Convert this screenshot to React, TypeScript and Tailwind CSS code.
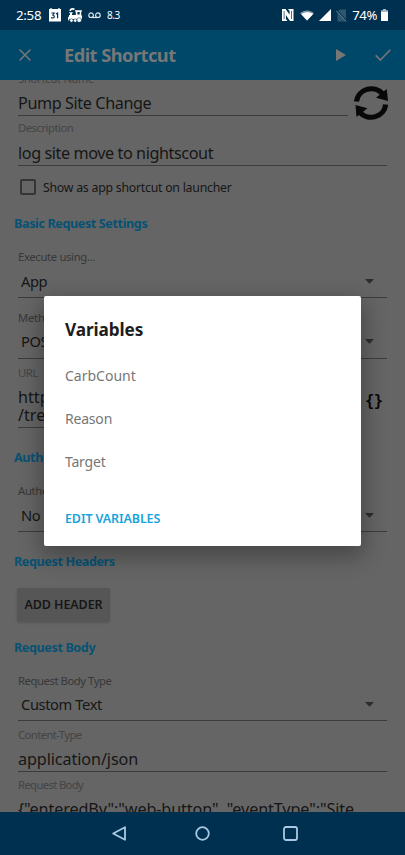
import React from "react";

function Label({ children, className = "" }: { children: React.ReactNode; className?: string }) {
  return <div className={"h-4 shrink-0 leading-4 whitespace-nowrap " + className}>{children}</div>;
}

function Heading({ children, className = "" }: { children: React.ReactNode; className?: string }) {
  return (
    <h2 className={"h-5 shrink-0 pl-3.5 text-[12.6px] leading-[22px] font-bold tracking-[-0.39px] whitespace-nowrap text-[#075274] " + className}>
      {children}
    </h2>
  );
}

function Value({ children, className = "" }: { children: React.ReactNode; className?: string }) {
  return (
    <div className={"h-6 shrink-0 text-[16.2px] leading-6 whitespace-nowrap text-[#161616] " + className}>{children}</div>
  );
}

function Select({ children, className = "" }: { children: React.ReactNode; className?: string }) {
  return (
    <div className={"mr-[18px] ml-[18px] flex shrink-0 items-start justify-between border-b border-[#3c3c3c] pr-[13px] pl-[3px] " + className}>
      <div className="text-[14.7px] leading-[22px] tracking-[-0.4px] whitespace-nowrap text-[#161616]">{children}</div>
      <svg className="mt-[9px] h-[5px] w-[9px]" viewBox="0 0 9 5">
        <path d="M0 0h9L4.5 4.8z" fill="#2c2c2c" />
      </svg>
    </div>
  );
}

function StatusBar() {
  return (
    <div className="flex h-[30px] shrink-0 items-center bg-[#00304f] pl-4 text-white">
      <span className="w-[33px] text-[13.3px] leading-5 tracking-[-0.3px] whitespace-nowrap">2:58</span>
      <svg className="h-[14px] w-[12px]" viewBox="0 0 12 14">
        <path d="M0 1h12v12.5H0z" fill="#fff" />
        <path d="M2 0v1.5M10 0v1.5" stroke="#fff" strokeWidth="1.3" />
        <path d="M2.4 5h2.8L3.8 7c2.2.3 1.8 3-.1 3-.7 0-1.2-.2-1.5-.6M7 6l1.6-1v5.3" fill="none" stroke="#00304f" strokeWidth="1.2" />
      </svg>
      <svg className="ml-[7px] h-[15px] w-[14px]" viewBox="0 0 14 15">
        <path d="M7 2.2H14v1.3h-.8V7.5H14V11H1.5L0 13V9.7L1 8.3V6.9h1V5.3H1.2V4.2h3.6v1.1H4v1.6h3.8V3.5H7zM9.4 4v2.6h2.3V4z" fill="#fff" fillRule="evenodd" />
        <path d="M2.2 3c0-1.8 1.8-2.6 4.3-1.6" fill="none" stroke="#fff" strokeWidth="1.7" />
        <circle cx="3.4" cy="12.5" r="1.7" fill="#fff" stroke="#00304f" strokeWidth=".5" />
        <circle cx="7.2" cy="12.5" r="1.7" fill="#fff" stroke="#00304f" strokeWidth=".5" />
        <circle cx="11.2" cy="12" r="2.3" fill="#fff" stroke="#00304f" strokeWidth=".5" />
      </svg>
      <svg className="ml-[6px] h-[7px] w-[13px]" viewBox="0 0 13 7">
        <circle cx="3.1" cy="3.2" r="2.3" fill="none" stroke="#dce6ec" strokeWidth="1.2" />
        <circle cx="9.9" cy="3.2" r="2.3" fill="none" stroke="#dce6ec" strokeWidth="1.2" />
        <path d="M3 5.5h7" stroke="#dce6ec" strokeWidth="1.2" />
      </svg>
      <span className="ml-[6px] text-[10px] leading-5 tracking-[-0.4px]">8.3</span>
      <div className="ml-auto flex items-center pr-[17px]">
        <svg className="h-[12px] w-[12px]" viewBox="0 0 12 12">
          <path d="M0 0h3.6l4 5.8V2L6 0h5.5v12H8L3.9 6.1v4L5.5 12H0z" fill="#fff" />
          <path d="M2.1 2v8.2M9.5 1.8V10" stroke="#00304f" strokeWidth=".7" />
        </svg>
        <svg className="ml-[5px] h-[12px] w-[16px]" viewBox="0 0 16 12">
          <path d="M1 4.2C5 .5 11 .5 15 4.2L8 11.6z" fill="#8298a7" />
          <path d="M2.4 5.2C6 2.8 10.5 2.8 14.2 5L8 11.6z" fill="#fff" />
        </svg>
        <svg className="ml-[4px] h-[12px] w-[12px]" viewBox="0 0 12 12">
          <path d="M12 0v12H0z" fill="#fff" />
        </svg>
        <svg className="ml-[5px] h-[13px] w-[11px]" viewBox="0 0 11 13">
          <path d="M3.5.5H10v12H1.5v-9z" fill="#2f5670" />
          <path d="M0 1l11 11.5" stroke="#00304f" strokeWidth="1.8" />
          <path d="M.2 1.7l10 10.8" stroke="#6c899b" strokeWidth="1" />
        </svg>
        <span className="ml-[5px] text-[13.2px] leading-5 tracking-[-0.4px]">74%</span>
        <svg className="ml-[4px] h-[12px] w-[7px]" viewBox="0 0 7 12">
          <path d="M2 0h3v1.3h2V12H0V1.3h2z" fill="#a8b9c5" />
          <path d="M0 3h7v9H0z" fill="#fff" />
        </svg>
      </div>
    </div>
  );
}

function AppBar() {
  return (
    <div className="flex h-[50px] shrink-0 items-center bg-[#00486a] pl-[19px]">
      <svg className="h-[12px] w-[12px]" viewBox="0 0 12 12">
        <path d="M.5.5l11 11M11.5.5l-11 11" stroke="#777" strokeWidth="1.5" />
      </svg>
      <h1 className="ml-[33px] text-[18.3px] leading-6 font-bold tracking-[-0.55px] whitespace-nowrap text-[#777]">
        Edit Shortcut
      </h1>
      <svg className="ml-auto h-[12px] w-[10px]" viewBox="0 0 10 12">
        <path d="M0 0l10 6-10 6z" fill="#777" />
      </svg>
      <svg className="mr-[14px] ml-[29px] h-[12px] w-[16px]" viewBox="0 0 16 12">
        <path d="M.7 6.4L5.3 11 15.3.8" fill="none" stroke="#777" strokeWidth="1.6" />
      </svg>
    </div>
  );
}

function Form() {
  return (
    <div className="flex min-h-0 flex-1 flex-col overflow-hidden bg-[#656565] text-[#383838]">
      <div className="-mt-[9px] flex h-[49px] shrink-0">
        <div className="ml-[18px] flex h-[45px] w-[330px] flex-col border-b border-[#3c3c3c]">
          <Label className="text-[11.3px] tracking-[-0.3px] text-[#444]">Shortcut Name</Label>
          <Value className="mt-1 tracking-[-0.4px]">Pump Site Change</Value>
        </div>
        <svg className="mt-[14px] ml-[6px] h-[36px] w-[35px] shrink-0" viewBox="0 0 35 36">
          <path d="M2.5 16.5A14.8 14.3 0 0 1 28.5 8.8" fill="none" stroke="#080808" strokeWidth="5.2" />
          <path d="M32.7 4l1.3 12-12-3.2z" fill="#080808" />
          <path d="M31.7 19.5A14.8 14.3 0 0 1 5.7 27.2" fill="none" stroke="#080808" strokeWidth="5.2" />
          <path d="M2.5 32L1.5 20l12 3.2z" fill="#080808" />
        </svg>
      </div>
      <div className="mx-[18px] flex h-[46px] shrink-0 flex-col border-b border-[#3c3c3c]">
        <Label className="text-[11.3px] tracking-[-0.5px] text-[#444]">Description</Label>
        <Value className="mt-[5px] tracking-[-0.42px]">log site move to nightscout</Value>
      </div>
      <div className="mt-[12px] ml-[20px] flex h-[18px] shrink-0 items-center">
        <div className="h-4 w-4 rounded-[2px] border-2 border-[#353535]" />
        <span className="mt-px ml-[7px] text-[12.3px] leading-4 tracking-[-0.24px] whitespace-nowrap text-[#161616]">
          Show as app shortcut on launcher
        </span>
      </div>
      <Heading className="mt-[17px]">Basic Request Settings</Heading>
      <Label className="mt-4 ml-[18px] text-[11.3px] tracking-[-0.35px]">Execute using...</Label>
      <Select className="mt-[5px] h-[28px]">App</Select>
      <Label className="mt-[12px] ml-[18px] text-[11.3px] tracking-[-0.25px]">Meth</Label>
      <Select className="mt-[4px] h-[29px]">POS</Select>
      <div className="mt-[6px] flex h-[63px] shrink-0 items-start">
        <div className="ml-[18px] flex h-[63px] w-[337px] flex-col border-b border-[#3c3c3c]">
          <Label className="text-[11.3px] tracking-[-0.4px] text-[#444]">URL</Label>
          <div className="mt-[7px] text-[16.2px] leading-[18px] text-[#161616]">
            http
            <br />
            /tre
          </div>
        </div>
        <span className="mt-[26px] ml-[10px] font-['DejaVu_Sans_Mono',monospace] text-[15.5px] leading-5 font-bold tracking-[-0.6px] text-[#080808]">
          {"{}"}
        </span>
      </div>
      <Heading className="mt-[19px]">Auth</Heading>
      <Label className="mt-4 ml-[18px] text-[11.3px] tracking-[-0.33px]">Authe</Label>
      <Select className="mt-[5px] h-[28px]">No</Select>
      <Heading className="mt-[19px]">Request Headers</Heading>
      <button className="mt-[17px] ml-[17px] h-[34px] w-[93px] shrink-0 rounded-[2px] bg-[#565656] text-[12.5px] font-semibold tracking-[-0.1px] whitespace-nowrap text-[#161616] shadow-sm">
        ADD HEADER
      </button>
      <Heading className="mt-[15px]">Request Body</Heading>
      <Label className="mt-4 ml-[18px] text-[11.3px] tracking-[-0.45px]">Request Body Type</Label>
      <Select className="mt-[4px] h-[28px]">Custom Text</Select>
      <Label className="mt-[6px] ml-[18px] text-[11.3px] tracking-[-0.6px] text-[#444]">Content-Type</Label>
      <div className="mx-[18px] mt-[4px] h-[25px] shrink-0 border-b border-[#3c3c3c]">
        <Value className="tracking-[-0.1px]">application/json</Value>
      </div>
      <Label className="mt-[5px] ml-[18px] text-[11.3px] tracking-[-0.65px] text-[#444]">Request Body</Label>
      <Value className="mt-[4px] ml-[18px] tracking-[-0.11px]">{'{"enteredBy":"web-button", "eventType":"Site'}</Value>
    </div>
  );
}

function NavBar() {
  return (
    <div className="flex h-[43px] shrink-0 items-center bg-[#00304f] pl-[112px]">
      <svg className="h-[15px] w-[14px]" viewBox="0 0 14 15">
        <path d="M13 1.2v12.6L1.2 7.5z" fill="none" stroke="#a9c9e3" strokeWidth="1.8" strokeLinejoin="round" />
      </svg>
      <svg className="ml-[69px] h-[15px] w-[15px]" viewBox="0 0 15 15">
        <circle cx="7.5" cy="7.5" r="6.3" fill="none" stroke="#a9c9e3" strokeWidth="1.8" />
      </svg>
      <svg className="ml-[73px] h-[15px] w-[15px]" viewBox="0 0 15 15">
        <rect x="1" y="1" width="13" height="13" rx="2" fill="none" stroke="#a9c9e3" strokeWidth="1.8" />
      </svg>
    </div>
  );
}

function VariablesDialog() {
  return (
    <div className="absolute top-[296px] left-[44px] flex h-[250px] w-[317px] flex-col rounded-[2px] bg-white pl-[21px] shadow-[0_8px_22px_3px_rgba(0,0,0,0.3)]">
      <h2 className="mt-[22px] text-[17.2px] leading-6 font-bold tracking-[-0.1px] text-[#1d1d1d]">Variables</h2>
      <ul className="mt-[12px] text-[14px] text-[#777]">
        <li className="h-[43px] leading-[43px]">CarbCount</li>
        <li className="h-[43px] leading-[43px] tracking-[-0.2px]">Reason</li>
        <li className="h-[43px] leading-[43px] tracking-[-0.2px]">Target</li>
      </ul>
      <button className="mt-[26px] self-start text-[12.5px] leading-5 font-semibold tracking-[-0.12px] text-[#18a4dc]">
        EDIT VARIABLES
      </button>
    </div>
  );
}

export default function App() {
  return (
    <div className="relative flex h-[855px] w-[405px] flex-col overflow-hidden font-['Noto_Sans',sans-serif]">
      <StatusBar />
      <AppBar />
      <Form />
      <NavBar />
      <VariablesDialog />
    </div>
  );
}
